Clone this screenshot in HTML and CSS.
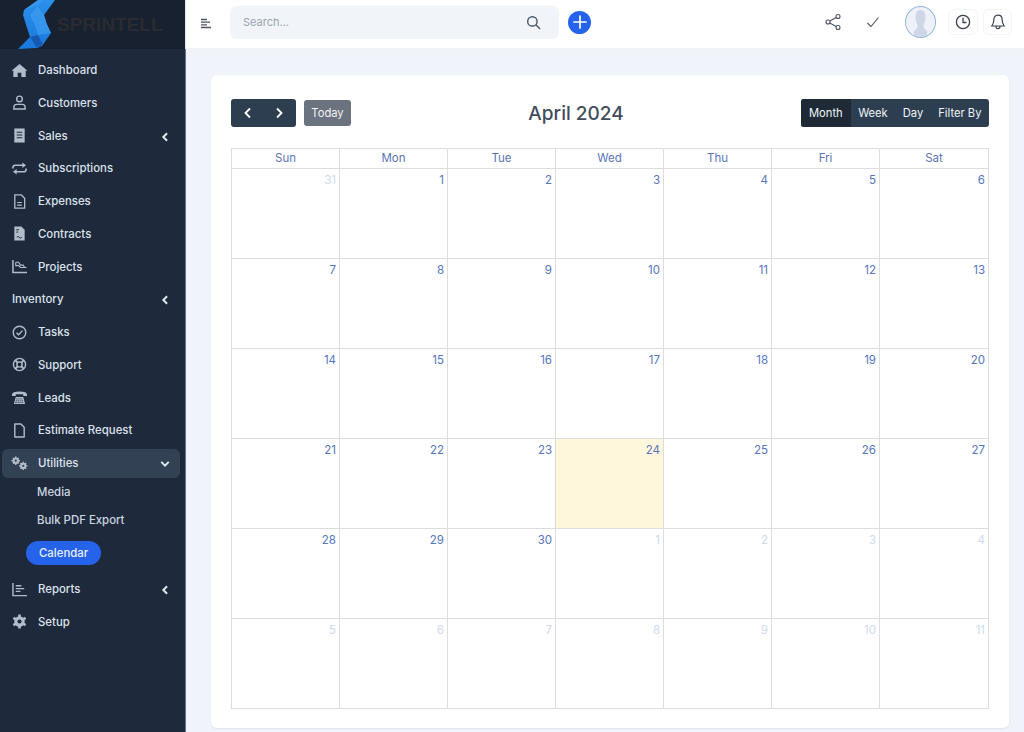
FILE: index.html
```html
<!DOCTYPE html>
<html lang="en">
<head>
  <meta charset="UTF-8" />
  <meta name="viewport" content="width=device-width, initial-scale=1.0" />
  <title>Calendar</title>
  <link rel="stylesheet" href="styles.css">
</head>
<body>
  <aside class="sidebar">
    <div class="logo-box">
      <svg class="logo-mark" viewBox="0 0 57 49" width="57" height="49">
        <defs>
          <linearGradient id="logoBlue" x1="0" y1="0" x2="0" y2="1">
            <stop offset="0" stop-color="#2a90ea"/>
            <stop offset="1" stop-color="#1a78dc"/>
          </linearGradient>
        </defs>
        <path d="M24 10 L38 0 L55 0 L44 15 Q46 24 51 33 L42 46 L37 48 L18 49 L30 37 Q26 25 23 15 Z" fill="url(#logoBlue)"/>
        <path d="M24 10 L38 0 L43 0 L30 15 Q36 27 38 35 L51 33 Q46 24 44 15 L37 5 Z" fill="#3d9df0" opacity=".7"/>
        <path d="M30 37 L38 35 L43 45 L37 48 Z" fill="#1559b0"/>
      </svg>
      <span class="logo-text">SPRINTELL</span>
    </div>
    <nav class="menu">
      <a class="nav-item">
        <svg class="nav-icon" viewBox="0 0 18 16"><path d="M9 1 L17.5 8.3 L15.6 8.3 L15.6 15 L11 15 L11 10.5 L7 10.5 L7 15 L2.4 15 L2.4 8.3 L.5 8.3 Z" fill="currentColor"/></svg>
        <span>Dashboard</span>
      </a>
      <a class="nav-item">
        <svg class="nav-icon" viewBox="0 0 18 16"><g fill="none" stroke="currentColor" stroke-width="1.5"><circle cx="9" cy="4.2" r="3"/><path d="M3 15 h12 v-2 q0-3-3-3 h-6 q-3 0-3 3 z"/></g></svg>
        <span>Customers</span>
      </a>
      <a class="nav-item">
        <svg class="nav-icon" viewBox="0 0 18 16"><path d="M3.5 .5 h11 v15 h-11 z" fill="currentColor"/><path d="M6 4.5 h6 M6 7.5 h6 M6 10.5 h6" stroke="#1e293b" stroke-width="1.1"/></svg>
        <span>Sales</span>
        <svg class="chevron" viewBox="0 0 10 12"><path d="M7.5 1.5 L3 6 L7.5 10.5" /></svg>
      </a>
      <a class="nav-item">
        <svg class="nav-icon" viewBox="0 0 18 16"><g fill="none" stroke="currentColor" stroke-width="1.7"><path d="M2 8 V7 q0-2.500 2.500-2.500 H13"/><path d="M16 8 v1 q0 2.500-2.500 2.500 H5"/></g><path d="M12 1.500 L16 4.500 L12 7.500 Z M6 8.500 L2 11.500 L6 14.500 Z" fill="currentColor"/></svg>
        <span>Subscriptions</span>
      </a>
      <a class="nav-item">
        <svg class="nav-icon" viewBox="0 0 18 16"><path d="M4 1 h7 l3.500 3.500 V15 H4 Z" fill="none" stroke="currentColor" stroke-width="1.4"/><path d="M6.500 9 h5 M6.500 11.800 h5" stroke="currentColor" stroke-width="1.200"/></svg>
        <span>Expenses</span>
      </a>
      <a class="nav-item">
        <svg class="nav-icon" viewBox="0 0 18 16"><path d="M3.500 .5 h7.500 l3.500 3.500 v11.500 h-11 z" fill="currentColor"/><path d="M5.500 4 h3 M5.500 6.500 h2 M6 12 q1.500-2 2.500 0 t3 0" stroke="#1e293b" stroke-width="1" fill="none"/></svg>
        <span>Contracts</span>
      </a>
      <a class="nav-item">
        <svg class="nav-icon" viewBox="0 0 18 16"><path d="M2 1 V14.500 H17" fill="none" stroke="currentColor" stroke-width="1.600"/><path d="M5 3.500 h3 l2 3 h3 l1.500 2.500 h2 M5 3.500 V7 h3 l2 2 h5" fill="none" stroke="currentColor" stroke-width="1.200"/></svg>
        <span>Projects</span>
      </a>
      <a class="nav-item no-icon">
        <span>Inventory</span>
        <svg class="chevron" viewBox="0 0 10 12"><path d="M7.5 1.500 L3 6 L7.5 10.500" /></svg>
      </a>
      <a class="nav-item">
        <svg class="nav-icon" viewBox="0 0 18 16"><circle cx="9" cy="8" r="6.700" fill="none" stroke="currentColor" stroke-width="1.500"/><path d="M5.800 8.200 L8 10.300 L12.200 6" fill="none" stroke="currentColor" stroke-width="1.500"/></svg>
        <span>Tasks</span>
      </a>
      <a class="nav-item">
        <svg class="nav-icon" viewBox="0 0 18 16"><g fill="none" stroke="currentColor"><circle cx="9" cy="8" r="6.500" stroke-width="1.500"/><circle cx="9" cy="8" r="2.800" stroke-width="1.500"/><path d="M4.500 3.500 L7 6 M13.500 3.500 L11 6 M4.500 12.500 L7 10 M13.500 12.500 L11 10" stroke-width="2"/></g></svg>
        <span>Support</span>
      </a>
      <a class="nav-item">
        <svg class="nav-icon" viewBox="0 0 18 16"><path d="M1 5 Q1 1.500 9 1.500 T17 5 V6.500 H13 V4.500 H5 V6.500 H1 Z" fill="currentColor"/><path d="M5 7.500 h8 l2 7.500 H3 Z" fill="currentColor"/><path d="M5.500 9.500 h7 M5 11.500 h8 M4.500 13.300 h9" stroke="#1e293b" stroke-width=".8" stroke-dasharray="1.500 .7"/></svg>
        <span>Leads</span>
      </a>
      <a class="nav-item">
        <svg class="nav-icon" viewBox="0 0 18 16"><path d="M4 1 h6.500 l3.500 3.500 V15 H4 Z" fill="none" stroke="currentColor" stroke-width="1.500" stroke-linejoin="round"/></svg>
        <span>Estimate Request</span>
      </a>
      <a class="nav-item open">
        <svg class="nav-icon" viewBox="0 0 18 16"><g fill="currentColor"><circle cx="5" cy="5" r="3.400"/><circle cx="13" cy="10.500" r="3.400"/></g><g stroke="currentColor" stroke-width="1.500"><path d="M5 .5 V9.500 M.5 5 H9.500 M2 2 L8 8 M8 2 L2 8"/><path d="M13 6 V15 M8.500 10.500 H17.500 M10 7.500 L16 13.500 M16 7.500 L10 13.500"/></g><circle cx="5" cy="5" r="1.200" fill="#334155"/><circle cx="13" cy="10.500" r="1.200" fill="#334155"/></svg>
        <span>Utilities</span>
        <svg class="chevron" viewBox="0 0 12 10"><path d="M1.500 2.500 L6 7 L10.500 2.500" /></svg>
      </a>
      <div class="submenu">
        <a class="sub-item">Media</a>
        <a class="sub-item">Bulk PDF Export</a>
        <a class="sub-item active">Calendar</a>
      </div>
      <a class="nav-item">
        <svg class="nav-icon" viewBox="0 0 18 16"><path d="M2 1 V14.500 H17" fill="none" stroke="currentColor" stroke-width="1.500"/><path d="M5 4 h6 M5 7 h9 M5 10 h5" stroke="currentColor" stroke-width="1.400"/></svg>
        <span>Reports</span>
        <svg class="chevron" viewBox="0 0 10 12"><path d="M7.5 1.500 L3 6 L7.5 10.500" /></svg>
      </a>
      <a class="nav-item">
        <svg class="nav-icon" viewBox="0 0 18 16"><circle cx="9" cy="8" r="5.600" fill="currentColor"/><path d="M9 .5 V15.500 M2.500 4.200 L15.500 11.800 M15.500 4.200 L2.500 11.800" stroke="currentColor" stroke-width="2.800"/><circle cx="9" cy="8" r="2.200" fill="#1e293b"/></svg>
        <span>Setup</span>
      </a>
    </nav>
  </aside>

  <div class="main">
    <header class="topbar">
      <svg class="hamburger" viewBox="0 0 12 11" width="12" height="11"><path d="M1 1.500 h6 M1 4.200 h9 M1 6.800 h6 M1 9.500 h10" stroke="#4b5563" stroke-width="1.300"/></svg>
      <div class="search">
        <span class="search-placeholder">Search...</span>
        <svg viewBox="0 0 16 16" width="15" height="15"><circle cx="6.800" cy="6.800" r="5" fill="none" stroke="#4b5563" stroke-width="1.500"/><path d="M10.500 10.500 L15 15" stroke="#4b5563" stroke-width="1.500"/></svg>
      </div>
      <button class="add-btn"><svg viewBox="0 0 14 14" width="14" height="14"><path d="M7 1 V13 M1 7 H13" stroke="#fff" stroke-width="1.700" stroke-linecap="round"/></svg></button>
      <div class="top-actions">
        <svg class="share" viewBox="0 0 16 18" width="16" height="18"><g fill="none" stroke="#4b5563" stroke-width="1.100"><circle cx="3" cy="9" r="2"/><circle cx="13" cy="3.500" r="2"/><circle cx="13" cy="14.500" r="2"/><path d="M4.800 8 L11.200 4.500 M4.800 10 L11.200 13.500"/></g></svg>
        <svg class="check" viewBox="0 0 14 14" width="14" height="14"><path d="M1.500 8 L5 11.500 L12.500 2.500" fill="none" stroke="#4b5563" stroke-width="1.100"/></svg>
        <div class="avatar">
          <svg viewBox="0 0 30 30" width="29" height="29"><circle cx="15" cy="15" r="15" fill="#eef1f7"/><path d="M15 2 C11 2 9.500 6 10 11 C10.300 14 11 16 12 17.500 C12 20 11 21.500 9 23 C8 24 8 27 8 30 H22 C22 27 22 24 21 23 C19 21.500 18 20 18 17.500 C19 16 19.700 14 20 11 C20.500 6 19 2 15 2 Z" fill="#cfd6e6"/></svg>
        </div>
        <button class="icon-btn"><svg viewBox="0 0 16 16" width="16" height="16"><circle cx="8" cy="8" r="6.600" fill="none" stroke="#374151" stroke-width="1.300"/><path d="M8 3.800 V8.500 H11.500" fill="none" stroke="#374151" stroke-width="1.300"/></svg></button>
        <button class="icon-btn"><svg viewBox="0 0 16 16" width="16" height="16"><path d="M8 1.200 C5 1.200 3.800 3.500 3.800 6 C3.800 9 3 10.500 1.800 12 H14.200 C13 10.500 12.200 9 12.200 6 C12.200 3.500 11 1.200 8 1.200 Z M6 12.500 C6 15.300 10 15.300 10 12.500" fill="none" stroke="#374151" stroke-width="1.200"/></svg></button>
      </div>
    </header>

    <main class="content">
      <section class="card">
        <div class="cal-toolbar">
          <div class="toolbar-left">
            <div class="btn-group nav-group">
              <button class="cal-btn"><svg viewBox="0 0 10 12" width="10" height="12"><path d="M7 1.500 L2.500 6 L7 10.500" /></svg></button>
              <button class="cal-btn"><svg viewBox="0 0 10 12" width="10" height="12"><path d="M3 1.500 L7.500 6 L3 10.500" /></svg></button>
            </div>
            <button class="today-btn">Today</button>
          </div>
          <h2 class="cal-title">April 2024</h2>
          <div class="btn-group view-group">
            <button class="view-btn active">Month</button>
            <button class="view-btn">Week</button>
            <button class="view-btn">Day</button>
            <button class="view-btn">Filter By</button>
          </div>
        </div>

        <div class="cal-grid">
          <div class="cal-head">Sun</div><div class="cal-head">Mon</div><div class="cal-head">Tue</div><div class="cal-head">Wed</div><div class="cal-head">Thu</div><div class="cal-head">Fri</div><div class="cal-head">Sat</div>

          <div class="cal-day other">31</div><div class="cal-day">1</div><div class="cal-day">2</div><div class="cal-day">3</div><div class="cal-day">4</div><div class="cal-day">5</div><div class="cal-day">6</div>
          <div class="cal-day">7</div><div class="cal-day">8</div><div class="cal-day">9</div><div class="cal-day">10</div><div class="cal-day">11</div><div class="cal-day">12</div><div class="cal-day">13</div>
          <div class="cal-day">14</div><div class="cal-day">15</div><div class="cal-day">16</div><div class="cal-day">17</div><div class="cal-day">18</div><div class="cal-day">19</div><div class="cal-day">20</div>
          <div class="cal-day">21</div><div class="cal-day">22</div><div class="cal-day">23</div><div class="cal-day today">24</div><div class="cal-day">25</div><div class="cal-day">26</div><div class="cal-day">27</div>
          <div class="cal-day">28</div><div class="cal-day">29</div><div class="cal-day">30</div><div class="cal-day other">1</div><div class="cal-day other">2</div><div class="cal-day other">3</div><div class="cal-day other">4</div>
          <div class="cal-day other">5</div><div class="cal-day other">6</div><div class="cal-day other">7</div><div class="cal-day other">8</div><div class="cal-day other">9</div><div class="cal-day other">10</div><div class="cal-day other">11</div>
        </div>
      </section>
    </main>
  </div>
</body>
</html>
```

FILE: styles.css
```css
* {
  box-sizing: border-box;
}
html, body {
  height: 100%;
}
body {
  margin: 0;
  display: flex;
  height: 732px;
  overflow: hidden;
  font-family: Inter, "Noto Sans", sans-serif;
  background: #f0f4fa;
  color: #374151;
}
button {
  font-family: inherit;
  border: none;
  cursor: pointer;
}

/* Sidebar */
.sidebar {
  width: 186px;
  flex-shrink: 0;
  display: flex;
  flex-direction: column;
  background: #1e293b;
}
.logo-box {
  height: 49px;
  display: flex;
  align-items: center;
  overflow: hidden;
  background: #18212f;
  border-right: 1px solid #e5e9ef;
}
.logo-mark {
  flex-shrink: 0;
}
.logo-text {
  font-family: "Liberation Sans", sans-serif;
  font-size: 19px;
  font-weight: 700;
  color: #2a2b30;
}
.menu {
  flex: 1;
  padding-top: 6.5px;
  border-right: 1px solid #64748b;
}
.nav-item {
  display: flex;
  align-items: center;
  height: 29px;
  margin: 0 5px 3.75px 2px;
  padding: 0 10px 0 9px;
  border-radius: 6px;
  font-size: 11.4px;
  font-weight: 500;
  color: #dbe2ec;
}
.nav-item.no-icon {
  padding-left: 10px;
}
.nav-item.open {
  background: #334155;
}
.nav-icon {
  width: 17px;
  height: 15px;
  margin-right: 10px;
  flex-shrink: 0;
  color: #b3bcc9;
}
.chevron {
  width: 10px;
  height: 10px;
  margin: 2px 0 0 auto;
  fill: none;
  stroke: #e2e8f0;
  stroke-width: 2.4;
}
.submenu {
  display: flex;
  flex-direction: column;
  align-items: flex-start;
  margin-top: -3.25px;
  margin-bottom: 9.5px;
}
.sub-item {
  height: 28px;
  line-height: 28px;
  padding-left: 37px;
  font-size: 11.4px;
  font-weight: 500;
  color: #cbd5e1;
}
.sub-item.active {
  height: 24px;
  line-height: 24px;
  margin: 7px 0 0 26px;
  padding: 0 13px;
  border-radius: 12px;
  background: #2563eb;
  color: #e8eefb;
}

/* Top bar */
.main {
  flex: 1;
  min-width: 0;
  display: flex;
  flex-direction: column;
}
.topbar {
  height: 49px;
  display: flex;
  align-items: center;
  padding: 0 12px 4px 14px;
  background: #fff;
  border-bottom: 1px solid #eef1f5;
}
.hamburger {
  margin-right: 18px;
  margin-top: 2px;
}
.search {
  width: 329px;
  height: 33px;
  display: flex;
  align-items: center;
  justify-content: space-between;
  padding: 0 18px 0 13px;
  border-radius: 6px;
  background: #f1f5f9;
}
.search-placeholder {
  font-size: 11px;
  color: #9ca3af;
}
.add-btn {
  width: 23px;
  height: 23px;
  margin-left: 9px;
  padding: 0;
  display: flex;
  align-items: center;
  justify-content: center;
  border-radius: 50%;
  background: #2563eb;
}
.top-actions {
  margin-left: auto;
  display: flex;
  align-items: center;
}
.share {
  margin-right: 25px;
}
.check {
  margin-right: 25px;
}
.avatar {
  width: 31px;
  height: 32px;
  margin-right: 12px;
  display: flex;
  align-items: center;
  justify-content: center;
  border: 1.5px solid #8fb2dc;
  border-radius: 50%;
  overflow: hidden;
  background: #eef1f7;
}
.icon-btn {
  width: 30px;
  height: 26px;
  padding: 0;
  display: flex;
  align-items: center;
  justify-content: center;
  background: #fff;
  border: 1px solid #f3f4f6;
  border-radius: 6px;
}
.icon-btn + .icon-btn {
  width: 29px;
  margin-left: 5px;
}

/* Calendar card */
.content {
  flex: 1;
  padding: 26px 15px 0 25px;
}
.card {
  height: 653px;
  padding: 24px 20px 0 20px;
  background: #fff;
  border-radius: 6px;
  box-shadow: 0 1px 2px rgba(30, 41, 59, 0.08);
}
.cal-toolbar {
  height: 28px;
  margin-bottom: 21px;
  display: flex;
  align-items: center;
  justify-content: space-between;
}
.toolbar-left {
  display: flex;
  align-items: center;
  gap: 8px;
}
.btn-group {
  display: flex;
  height: 28px;
  border-radius: 3px;
  overflow: hidden;
  background: #2c3e50;
}
.nav-group {
  width: 65px;
}
.cal-btn {
  flex: 1;
  padding: 0 0 0 2px;
  display: flex;
  align-items: center;
  justify-content: center;
  background: transparent;
}
.cal-btn + .cal-btn {
  padding: 0 2px 0 0;
}
.cal-btn svg {
  fill: none;
  stroke: #fff;
  stroke-width: 1.8;
}
.today-btn {
  width: 47px;
  height: 26px;
  padding: 0;
  border-radius: 3px;
  background: #6b7280;
  color: #f3f4f6;
  font-size: 11.2px;
}
.cal-title {
  margin: 0;
  font-size: 19px;
  font-weight: 500;
  color: #414c5c;
}
.view-group {
  width: 188px;
}
.view-btn {
  padding: 0 7.5px;
  background: transparent;
  color: #f1f5f9;
  font-size: 11.2px;
  white-space: nowrap;
}
.view-btn.active {
  width: 50px;
  padding: 0;
  background: #1e2b37;
}

/* Month grid */
.cal-grid {
  display: grid;
  width: 758px;
  grid-template-columns: repeat(6, 108px) 1fr;
  grid-template-rows: 20px repeat(6, 90px);
  border-top: 1px solid #ddd;
  border-left: 1px solid #ddd;
}
.cal-head {
  padding-top: 1px;
  text-align: center;
  font-size: 11.5px;
  line-height: 16px;
  color: #5b74b8;
  border-right: 1px solid #ddd;
  border-bottom: 1px solid #ddd;
}
.cal-day {
  padding: 3px 3px 0 0;
  text-align: right;
  font-size: 11.5px;
  line-height: 16px;
  color: #5575c0;
  border-right: 1px solid #ddd;
  border-bottom: 1px solid #ddd;
}
.cal-day.other {
  color: #cdd9ee;
}
.cal-day.today {
  background: #fef7dc;
}
```
